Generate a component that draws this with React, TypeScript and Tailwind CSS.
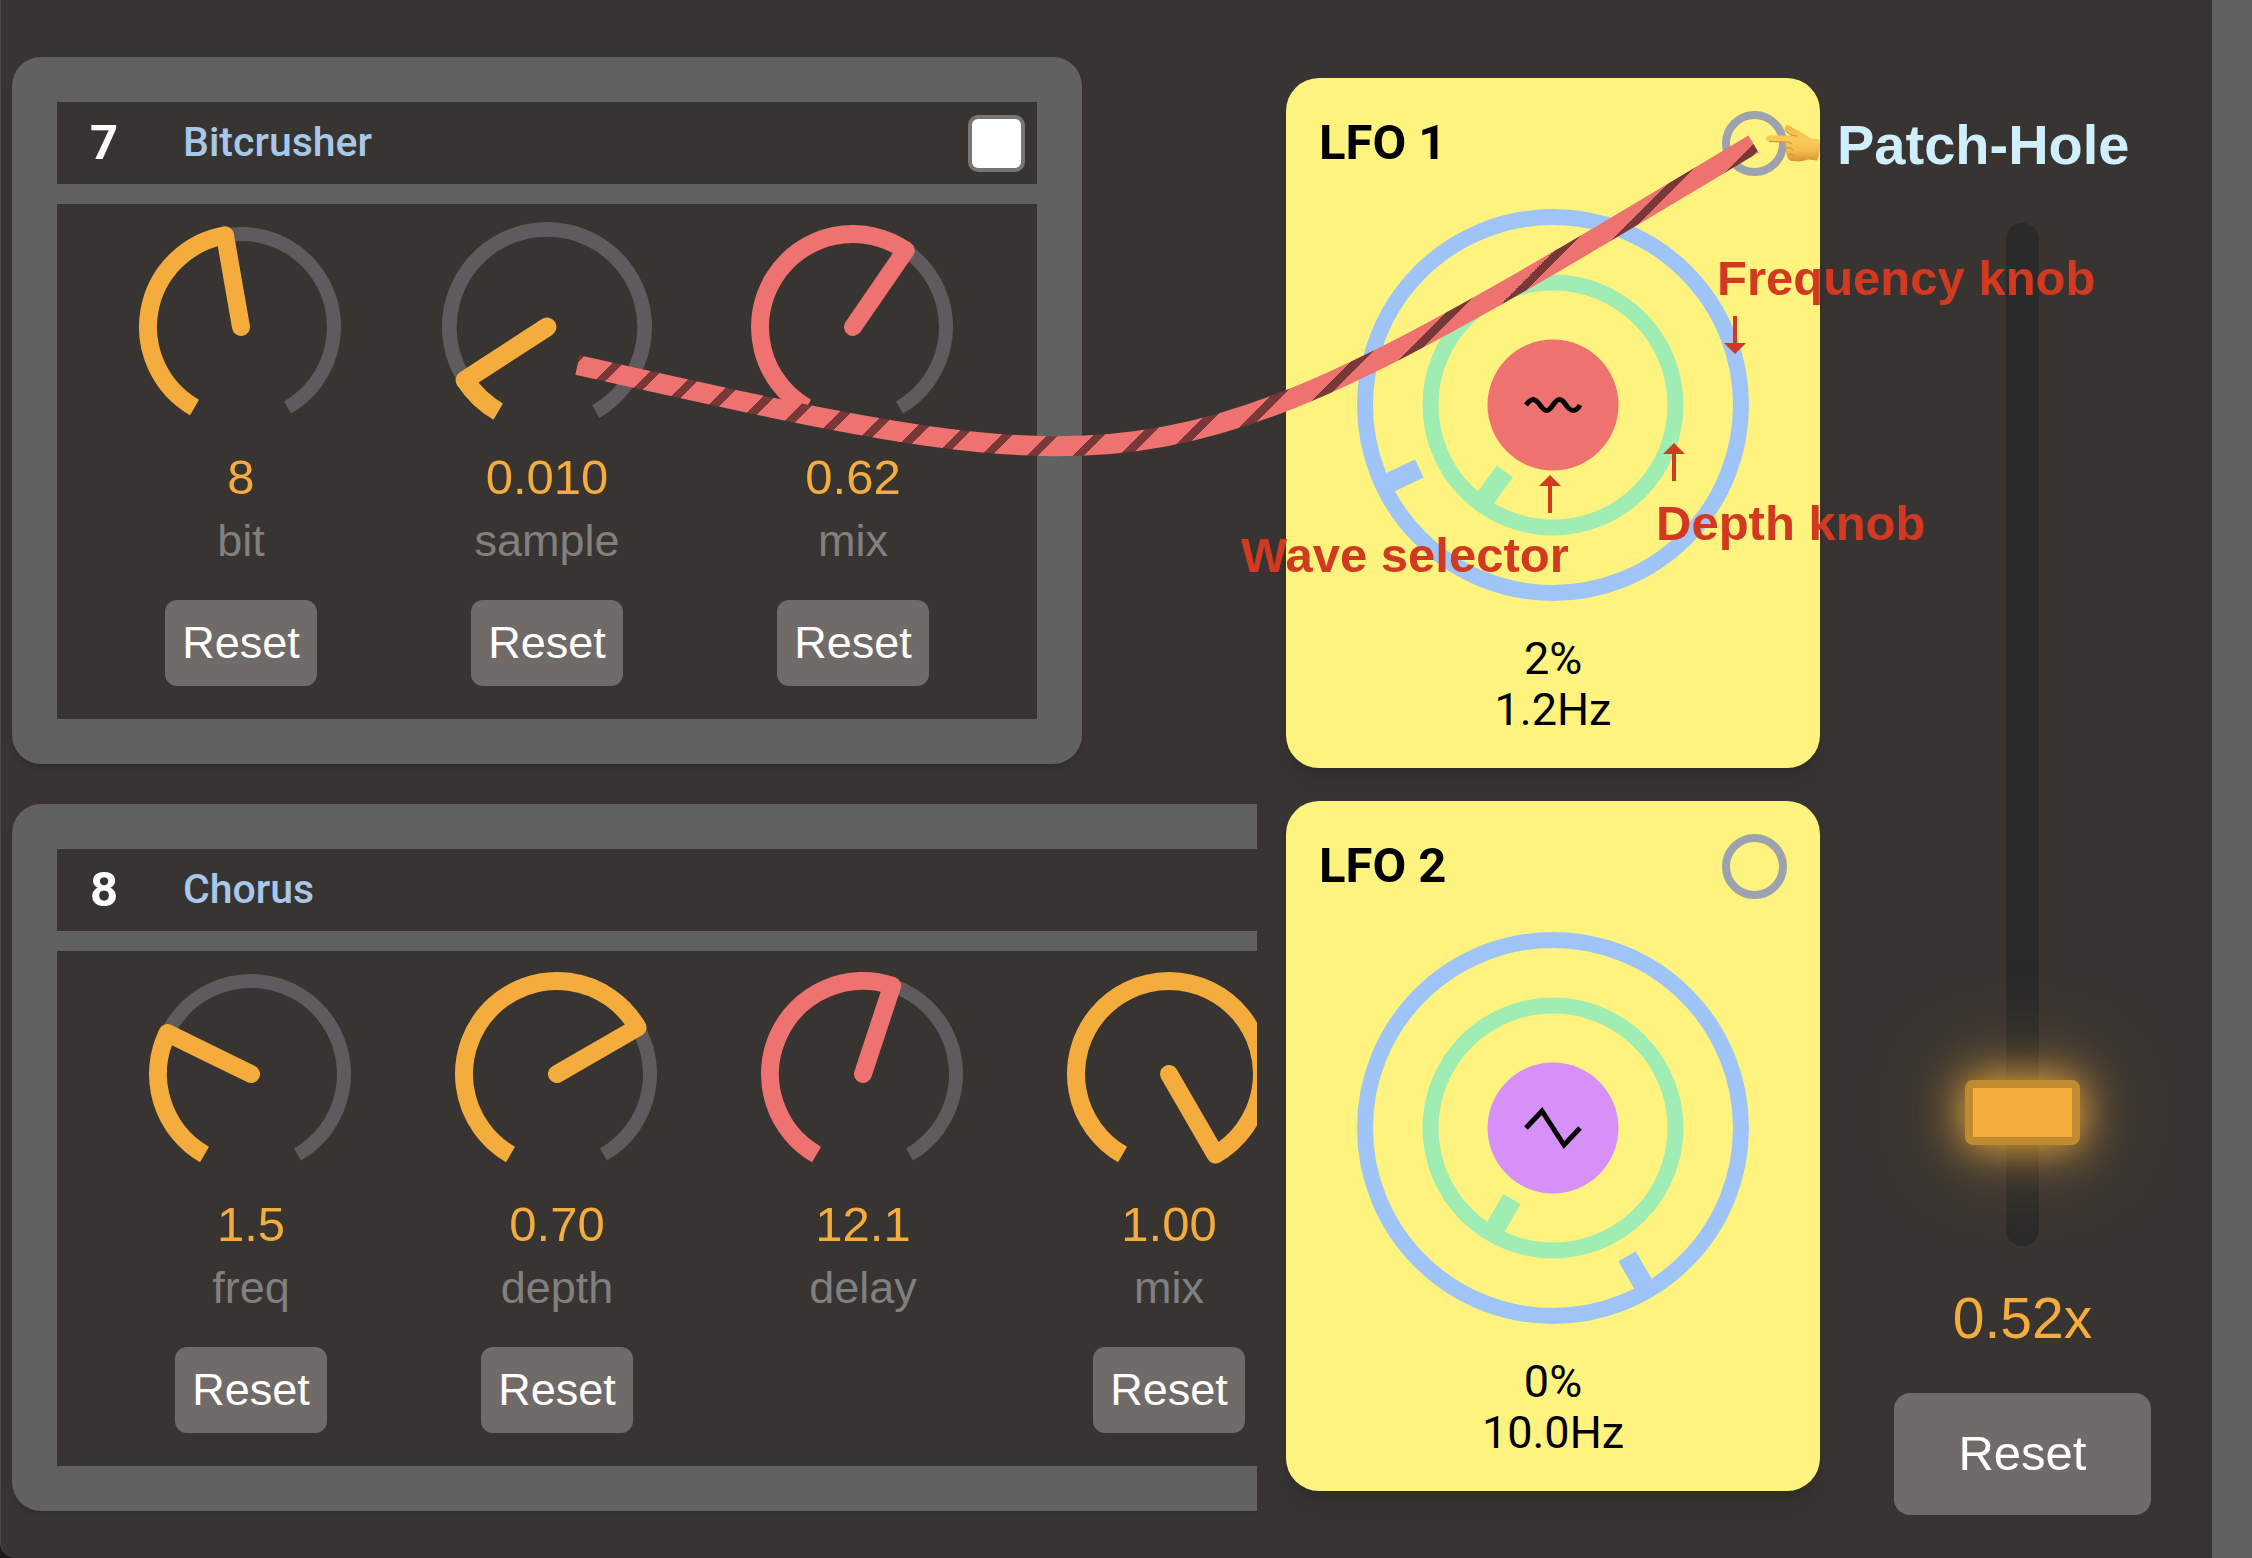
import { useState } from "react";

const ORANGE = "#f4ad3d";
const CORAL = "#ee726f";

interface KnobData {
  label: string;
  display: string;
  value: number; // 0..1 position on the dial
  patched?: boolean;
  active?: boolean;
  resettable?: boolean;
}

interface EffectData {
  slot: number;
  name: string;
  padding: string;
  knobs: KnobData[];
}

const effects: EffectData[] = [
  {
    slot: 7,
    name: "Bitcrusher",
    padding: "px-[31px]",
    knobs: [
      { label: "bit", display: "8", value: 0.467 },
      { label: "sample", display: "0.010", value: 0.09, active: true },
      { label: "mix", display: "0.62", value: 0.615, patched: true },
    ],
  },
  {
    slot: 8,
    name: "Chorus",
    padding: "px-[41px]",
    knobs: [
      { label: "freq", display: "1.5", value: 0.287 },
      { label: "depth", display: "0.70", value: 0.7 },
      { label: "delay", display: "12.1", value: 0.561, patched: true, resettable: false },
      { label: "mix", display: "1.00", value: 1 },
    ],
  },
];

// angles run clockwise from straight down, dials sweep 30deg -> 330deg
const polar = (r: number, deg: number) => {
  const a = (deg * Math.PI) / 180;
  return `${(-r * Math.sin(a)).toFixed(2)} ${(r * Math.cos(a)).toFixed(2)}`;
};

const arc = (r: number, from: number, to: number) =>
  `M${polar(r, from)} A${r} ${r} 0 ${to - from > 180 ? 1 : 0} 1 ${polar(r, to)}`;

function Knob({ label, display, value, patched, active, resettable = true }: KnobData) {
  const r = 93;
  const deg = 30 + value * 300;
  const color = patched ? CORAL : ORANGE;

  return (
    <div className="w-[306px] shrink-0 flex flex-col items-center">
      <svg viewBox="-123 -123 246 246" className="size-[246px]" fill="none" aria-hidden="true">
        <g transform={active ? "scale(1.05)" : undefined}>
          <path d={arc(r, 30, 330)} stroke="#5d5b5e" strokeWidth={14} />
          <path d={arc(r, 30, deg)} stroke={color} strokeWidth={18} />
          <path d={`M0 0 L${polar(r, deg)}`} stroke={color} strokeWidth={18} strokeLinecap="round" />
        </g>
      </svg>
      <span className="text-[49px] leading-[54px] text-[#f4ad3d]">{display}</span>
      <span className="mt-[11px] text-[45px] leading-[51px] text-[#808080]">{label}</span>
      {resettable && (
        <button type="button" className="mt-[34px] h-[86px] px-[17px] pb-0.5 rounded-xl bg-[#706b68] text-[45px] leading-[51px] text-white">
          Reset
        </button>
      )}
    </div>
  );
}

function Effect({ effect }: { effect: EffectData }) {
  const id = `effect-${effect.slot}`;

  return (
    <section className="w-max shrink-0 rounded-[29px] bg-[#61625f] p-[45px] shadow-md">
      <header className="flex items-center h-[82px] pl-[33px] pr-3 bg-[#383431] font-[Roboto,sans-serif]">
        <span className="w-[93px] text-[49px] font-bold text-white">{effect.slot}</span>
        <label htmlFor={id} className="text-[41px] font-medium text-[#a8c8e9]">{effect.name}</label>
        <input id={id} type="checkbox" className="ml-auto appearance-none size-[57px] rounded-[10px] border-4 border-[#767676] bg-white checked:bg-[#a8c8e9]" />
      </header>
      <div className={`mt-5 flex items-start h-[515px] bg-[#383431] ${effect.padding}`}>
        {effect.knobs.map((knob) => (
          <Knob key={knob.label} {...knob} />
        ))}
      </div>
    </section>
  );
}

interface LfoProps {
  name: string;
  depth: string;
  freq: string;
  depthDeg: number;
  freqDeg: number;
  wave: "sine" | "triangle";
}

function Lfo({ name, depth, freq, depthDeg, freqDeg, wave }: LfoProps) {
  return (
    <section className="flex flex-col items-center gap-8 p-[33px] rounded-[33px] bg-[#fff37f] shadow-xl text-black font-[Roboto,sans-serif]">
      <header className="self-stretch h-[66px] flex items-start justify-between">
        <h2 className="text-[49px] leading-[64px] font-bold">{name}</h2>
        <button type="button" aria-label={`${name} patch hole`} className="size-[65px] rounded-full border-8 border-[#9ca3af]" />
      </header>
      <svg viewBox="-196 -196 392 392" className="size-[392px]" fill="none" aria-hidden="true">
        <circle r={188} stroke="#9fc5f8" strokeWidth={16} />
        <rect x={-10} y={148} width={20} height={33} fill="#9fc5f8" transform={`rotate(${freqDeg})`} />
        <circle r={122.5} stroke="#a0edb3" strokeWidth={16} />
        <rect x={-10} y={82} width={20} height={33} fill="#a0edb3" transform={`rotate(${depthDeg})`} />
        <circle r={65.5} fill={wave === "sine" ? CORAL : "#d890f9"} />
        {wave === "sine" ? (
          <path
            d="M-27 0 C-24 -4 -22 -5.500 -20 -5.500 C-14 -5.500 -12 5.500 -6.500 5.500 C-1 5.500 1 -5.500 6.500 -5.500 C12 -5.500 14 5.500 20 5.500 C23 5.500 25 4 27 0"
            stroke="#000"
            strokeWidth={5}
          />
        ) : (
          <path d="M-27 0 L-11 -17 L11 17 L27 0" stroke="#000" strokeWidth={5} />
        )}
      </svg>
      <p className="text-center text-[45px] leading-[51px]">
        {depth}
        <br />
        {freq}
      </p>
    </section>
  );
}

function SpeedSlider() {
  const [speed, setSpeed] = useState(0.52);

  return (
    <div className="w-[405px] shrink-0 pt-[223px] flex flex-col items-center">
      <div className="grid justify-items-center h-[1023px]">
        <div className="col-start-1 row-start-1 w-[33px] rounded-full bg-[#2a2a2a]" />
        <input
          type="range"
          aria-label="Speed"
          min={0.1}
          max={4.1}
          step={0.01}
          value={speed}
          onChange={(e) => setSpeed(Number(e.target.value))}
          className="col-start-1 row-start-1 w-[115px] h-[1023px] appearance-none bg-transparent [writing-mode:vertical-lr] [direction:rtl] [&::-webkit-slider-thumb]:appearance-none [&::-webkit-slider-thumb]:w-[115px] [&::-webkit-slider-thumb]:h-[65px] [&::-webkit-slider-thumb]:rounded-lg [&::-webkit-slider-thumb]:border-8 [&::-webkit-slider-thumb]:border-[#c08b2e] [&::-webkit-slider-thumb]:bg-[#f4ad3d] [&::-webkit-slider-thumb]:shadow-[0_0_41px_#f4ad3d,0_0_98px_#f4ad3d80]"
        />
      </div>
      <span className="mt-10 text-[57px] leading-[65px] text-[#f4ad3d]">{speed.toFixed(2)}x</span>
      <button
        type="button"
        onClick={() => setSpeed(1)}
        className="mt-[42px] w-[257px] h-[122px] pb-0.5 rounded-2xl bg-[#706a69] text-[49px] leading-[54px] text-white"
      >
        Reset
      </button>
    </div>
  );
}

function PatchCable() {
  return (
    <svg viewBox="570 130 1200 340" className="absolute left-[570px] top-[130px] w-[1200px] h-[340px] pointer-events-none" fill="none" aria-hidden="true">
      <defs>
        <linearGradient id="cable" gradientUnits="userSpaceOnUse" spreadMethod="repeat" x1="7.1" y1="0" x2="30.15" y2="23.05">
          <stop offset="0" stopColor="#783837" />
          <stop offset="0.25" stopColor="#783837" />
          <stop offset="0.25" stopColor={CORAL} />
          <stop offset="1" stopColor={CORAL} />
        </linearGradient>
      </defs>
      <path d="M577.5 365 C1165.5 497 1165.5 497 1753.5 144" stroke="url(#cable)" strokeWidth={20} />
    </svg>
  );
}

function Arrow({ className }: { className: string }) {
  return (
    <svg viewBox="0 0 22 38" className={`absolute w-[22px] h-[38px] ${className}`} aria-hidden="true">
      <path d="M11 0 L22 11 H13 V38 H9 V11 H0 Z" fill="#d13a21" />
    </svg>
  );
}

function Hand() {
  return (
    <svg viewBox="0 0 54 37" className="absolute left-[1766px] top-[125px] w-[54px] h-[37px]" aria-hidden="true">
      <defs>
        <linearGradient id="skin" x1="0" y1="0" x2="0" y2="1">
          <stop offset="0" stopColor="#f3b944" />
          <stop offset="0.4" stopColor="#f9cb5a" />
          <stop offset="0.7" stopColor="#f3bd4b" />
          <stop offset="1" stopColor="#d99433" />
        </linearGradient>
      </defs>
      <path
        d="M3 10.500 C-1 11 -1 16 3 16.500 L19 17 C20 19 19 21 20 23 C20 26 20 28 21 30 C21 34 24 36.500 28 36 C33 37 38 36 42 34.500 L51 35.500 C54 30 55 20 53 14 C48 14 45 14 41 11 C35 6 29 5 24 1 C21 -1 17 2 19 5 C20 7 22 8 24 10.500 Z"
        fill="url(#skin)"
      />
      <path d="M3 16.500 L19 17 C22 17 24 17 26 19 M20 23 C23 22 25 23 27 25 M21 30 C24 28 26 29 28 31 M19 5 C21 8 26 11 31 11" fill="none" stroke="#cf8d30" strokeWidth={1} />
    </svg>
  );
}

function Annotations() {
  return (
    <div className="absolute left-0 top-0 pointer-events-none whitespace-nowrap font-bold text-[49px] leading-[54px] text-[#d13a21]">
      <Hand />
      <p className="absolute left-[1837px] top-[113px] text-[56px] leading-[64px] text-[#cfeffd]">Patch-Hole</p>
      <p className="absolute left-[1717px] top-[251px]">Frequency knob</p>
      <Arrow className="left-[1724px] top-[316px] rotate-180" />
      <p className="absolute left-[1656px] top-[496px]">Depth knob</p>
      <Arrow className="left-[1663px] top-[443px]" />
      <p className="absolute left-[1241px] top-[528px]">Wave selector</p>
      <Arrow className="left-[1539px] top-[475px]" />
    </div>
  );
}

export default function App() {
  return (
    <div className="relative min-h-screen overflow-hidden flex bg-[#1b1b1c] font-['Liberation_Sans',Arial,sans-serif]">
      <main className="flex-1 min-w-0 flex rounded-bl-[16px] border-l border-[#4b4946] bg-[#383431]">
        <div className="flex-1 min-w-0 overflow-hidden flex flex-col items-start gap-10 pl-[11px] pt-[57px]">
          {effects.map((effect) => (
            <Effect key={effect.slot} effect={effect} />
          ))}
        </div>
        <div className="w-[534px] shrink-0 ml-[29px] pt-[78px] flex flex-col gap-[33px]">
          <Lfo name="LFO 1" depth="2%" freq="1.2Hz" depthDeg={36} freqDeg={64.6} wave="sine" />
          <Lfo name="LFO 2" depth="0%" freq="10.0Hz" depthDeg={30} freqDeg={330} wave="triangle" />
        </div>
        <SpeedSlider />
      </main>
      <div className="w-10 shrink-0 -ml-[13px] bg-[#61625f]" />
      <PatchCable />
      <Annotations />
    </div>
  );
}
